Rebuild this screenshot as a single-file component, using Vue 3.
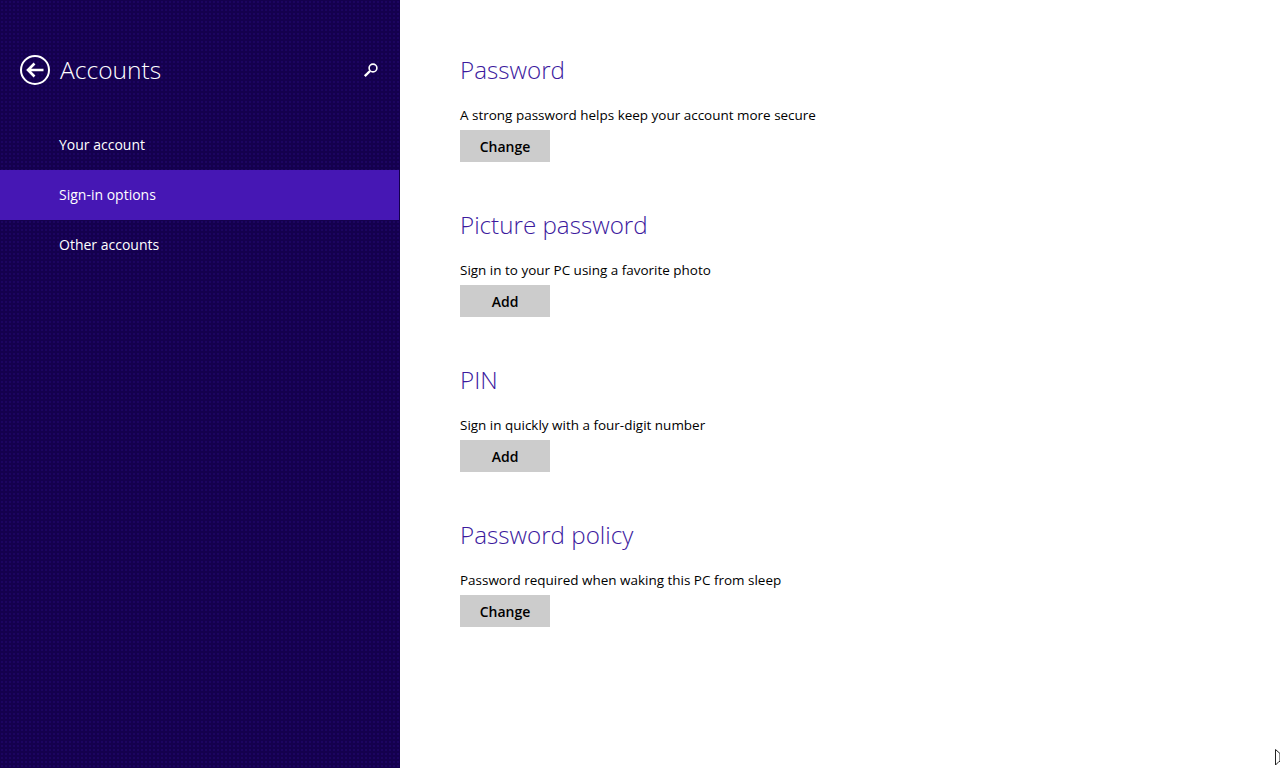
<template>
  <div class="settings">
    <aside class="sidebar">
      <header class="sidebar-header">
        <button class="back" aria-label="Back">
          <svg viewBox="0 0 32 32" width="32" height="32" fill="none" stroke="#fff">
            <circle cx="16" cy="16" r="14" stroke-width="2" />
            <path d="M24.5 16H9M15.5 9.5L9 16l6.5 6.5" stroke-width="2.6" />
          </svg>
        </button>
        <h1 class="sidebar-title">Accounts</h1>
        <svg class="search" viewBox="0 0 16 16" width="16" height="16" fill="none" stroke="#fff">
          <circle cx="10" cy="6" r="3.9" stroke-width="1.6" />
          <path d="M7 9L1.8 14.2" stroke-width="2.4" />
        </svg>
      </header>
      <nav class="nav">
        <a
          v-for="item in navItems"
          :key="item"
          class="nav-item"
          :class="{ active: item === current }"
        >{{ item }}</a>
      </nav>
    </aside>

    <main class="content">
      <section v-for="section in sections" :key="section.title" class="section">
        <h2 class="section-title">{{ section.title }}</h2>
        <p class="section-text">{{ section.text }}</p>
        <button class="action">{{ section.action }}</button>
      </section>
    </main>

    <!-- mouse pointer, cut off by the screen edge -->
    <svg class="pointer" viewBox="0 0 5 18" width="5" height="18">
      <path d="M0.5 0.5V16L4 12.5h1V4.5z" fill="#fff" stroke="#222" stroke-width="1" />
    </svg>
  </div>
</template>

<script setup>
const current = 'Sign-in options'
const navItems = ['Your account', 'Sign-in options', 'Other accounts']

const sections = [
  { title: 'Password', text: 'A strong password helps keep your account more secure', action: 'Change' },
  { title: 'Picture password', text: 'Sign in to your PC using a favorite photo', action: 'Add' },
  { title: 'PIN', text: 'Sign in quickly with a four-digit number', action: 'Add' },
  { title: 'Password policy', text: 'Password required when waking this PC from sleep', action: 'Change' }
]
</script>

<style scoped>
.settings {
  position: relative;
  display: flex;
  width: 1280px;
  height: 768px;
  overflow: hidden;
  background: #fff;
  font-family: "Open Sans", "Noto Sans", sans-serif;
}

.sidebar {
  flex: 0 0 400px;
  /* the screenshot's dark pane has a faint dot pattern */
  background-color: #14004e;
  background-image: radial-gradient(circle, #1c0460 0.8px, transparent 1px);
  background-size: 4px 4px;
  color: #fff;
}

.sidebar-header {
  display: flex;
  align-items: center;
  height: 32px;
  padding: 54px 21px 0 19px;
}

.back {
  width: 32px;
  height: 32px;
  padding: 0;
  margin-right: 9px;
  background: none;
  border: none;
}

.sidebar-title {
  flex: 1;
  margin: 0;
  font-size: 24.6px;
  font-weight: 300;
  line-height: 32px;
}

.nav {
  display: flex;
  flex-direction: column;
  margin-top: 34px;
}

.nav-item {
  width: 399px;
  height: 50px;
  padding-left: 59px;
  box-sizing: border-box;
  font-size: 14px;
  line-height: 50px;
  color: #fff;
}

.nav-item.active {
  background: #4617b4;
}

.content {
  flex: 1;
  padding: 54px 0 0 60px;
}

.section {
  height: 155px;
}

.section-title {
  margin: 0;
  font-size: 24.2px;
  font-weight: 300;
  line-height: 32px;
  color: #3c1a9e;
}

.section-text {
  margin: 17px 0 2px;
  font-size: 13.47px;
  line-height: 25px;
  color: #000;
}

.action {
  display: block;
  width: 90px;
  height: 32px;
  padding: 0;
  background: #ccc;
  border: none;
  font-family: inherit;
  font-size: 14px;
  font-weight: 600;
  color: #000;
}

.pointer {
  position: absolute;
  right: 0;
  top: 749px;
}
</style>
